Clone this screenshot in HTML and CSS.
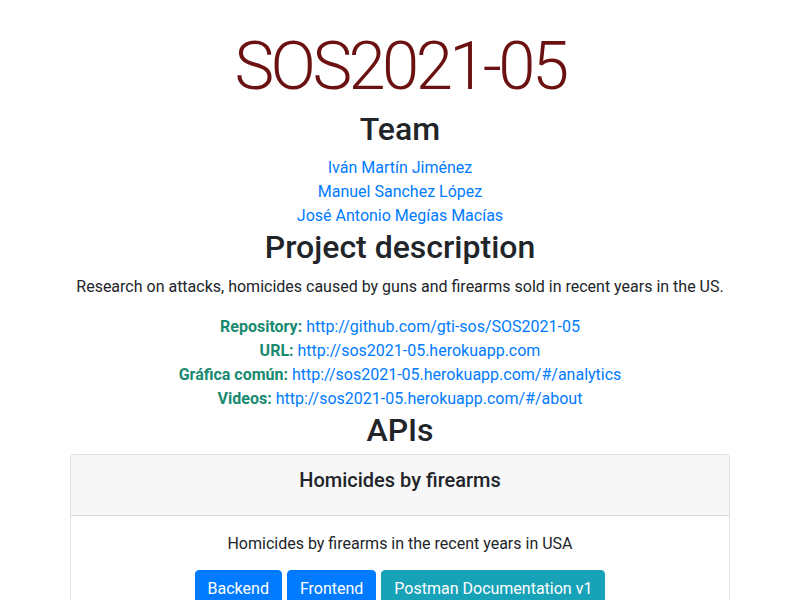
FILE: index.html
```html
<!DOCTYPE html>
<html lang="en">
<head>
<meta charset="utf-8">
<title>SOS2021-05</title>
<link rel="stylesheet" href="styles.css">
</head>
<body>
<main class="page">
  <h1 class="title">SOS2021-05</h1>
  <h2 class="section">Team</h2>
  <ul class="team">
    <li><a href="#">Iván Martín Jiménez</a></li>
    <li><a href="#">Manuel Sanchez López</a></li>
    <li><a href="#">José Antonio Megías Macías</a></li>
  </ul>
  <h2 class="section">Project description</h2>
  <p class="desc">Research on attacks, homicides caused by guns and firearms sold in recent years in the US.</p>
  <ul class="links">
    <li><strong>Repository:</strong> <a href="#">http://github.com/gti-sos/SOS2021-05</a></li>
    <li><strong>URL:</strong> <a href="#">http://sos2021-05.herokuapp.com</a></li>
    <li><strong>Gráfica común:</strong> <a href="#">http://sos2021-05.herokuapp.com/#/analytics</a></li>
    <li><strong>Videos:</strong> <a href="#">http://sos2021-05.herokuapp.com/#/about</a></li>
  </ul>
  <h2 class="section section-apis">APIs</h2>
  <div class="card">
    <div class="card-header">
      <h4 class="card-title">Homicides by firearms</h4>
    </div>
    <div class="card-body">
      <p class="card-text">Homicides by firearms in the recent years in USA</p>
      <div class="actions">
        <a class="btn btn-primary" href="#">Backend</a>
        <a class="btn btn-primary" href="#">Frontend</a>
        <a class="btn btn-info" href="#">Postman Documentation v1</a>
      </div>
    </div>
  </div>
</main>
</body>
</html>
```
FILE: styles.css
```css
* { box-sizing: border-box; }
html, body { margin: 0; padding: 0; }
body {
  font-family: Roboto, "Open Sans", "Liberation Sans", sans-serif;
  font-size: 16px;
  line-height: 1.5;
  color: #212529;
  background: #fff;
}
a { color: #007bff; text-decoration: none; }
.page {
  width: 660px;
  margin: 0 auto;
  padding-top: 15px;
  text-align: center;
}
.title {
  margin: 0;
  padding-top: 7px;
  font-family: Roboto, sans-serif;
  font-size: 67px;
  font-weight: 300;
  letter-spacing: -3.6px;
  line-height: 88px;
  color: #6b1111;
}
.section {
  margin: 0 0 8px;
  font-size: 32px;
  font-weight: 500;
  line-height: 1.2;
}
.section-apis { margin-bottom: 5px; }
.team, .links {
  list-style: none;
  margin: 0;
  padding: 0;
}
.desc { margin: 0 0 16px; }
.links strong { color: #188a70; font-weight: 700; }
.card {
  border: 1px solid rgba(0,0,0,.125);
  border-radius: 4px;
  overflow: hidden;
}
.card-header {
  background: #f7f7f7;
  border-bottom: 1px solid rgba(0,0,0,.125);
  padding: 11px 20px 13px;
}
.card-title {
  margin: 0 0 8px;
  font-size: 20px;
  font-weight: 500;
  line-height: 28px;
}
.card-body { padding: 16px 20px 20px; }
.card-text { margin: 0 0 14px; }
.actions {
  display: flex;
  justify-content: center;
  gap: 5px;
}
.btn {
  display: inline-block;
  padding: 6px 12px;
  border-radius: 4px;
  color: #fff;
  line-height: 24px;
  border: 1px solid transparent;
}
.btn-primary { background: #007bff; border-color: #007bff; }
.btn-info { background: #17a2b8; border-color: #17a2b8; }
```
